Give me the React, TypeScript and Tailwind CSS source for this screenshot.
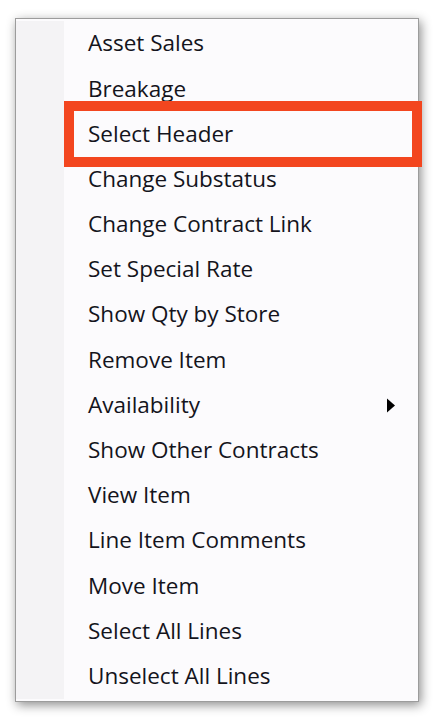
const items = [
  "Asset Sales",
  "Breakage",
  "Select Header",
  "Change Substatus",
  "Change Contract Link",
  "Set Special Rate",
  "Show Qty by Store",
  "Remove Item",
  "Availability",
  "Show Other Contracts",
  "View Item",
  "Line Item Comments",
  "Move Item",
  "Select All Lines",
  "Unselect All Lines",
];

function MenuRow({ label, hasSubmenu }: { label: string; hasSubmenu?: boolean }) {
  return (
    <div className="flex h-[45.2px] items-center">
      <div className="h-full w-[48px] shrink-0 bg-[#f4f3f5]" />
      <span className="ml-[24px] flex-1 text-[22.5px] leading-none text-[#14141c]">{label}</span>
      {hasSubmenu && (
        <svg width="10" height="15" viewBox="0 0 10 15" className="mr-[22px]">
          <path d="M1 0.5 L9 7.5 L1 14.5 Z" fill="#000" />
        </svg>
      )}
    </div>
  );
}

export default function App() {
  return (
    <div
      className="relative h-[722px] w-[435px] bg-white"
      style={{ fontFamily: '"Open Sans", "Noto Sans", "Liberation Sans", sans-serif' }}
    >
      <div className="pl-[15px] pt-[18px]">
        <div className="w-[404px] border border-[#9c9c9c] bg-[#fcfbfd] py-[2px] shadow-[2px_3px_10px_rgba(0,0,0,0.45)]">
          {items.map((label) => (
            <MenuRow key={label} label={label} hasSubmenu={label === "Availability"} />
          ))}
        </div>
      </div>

      {/* highlight annotation */}
      <div className="absolute left-[64px] top-[101px] h-[66px] w-[358px] border-[10px] border-[#f3461f]" />
    </div>
  );
}
